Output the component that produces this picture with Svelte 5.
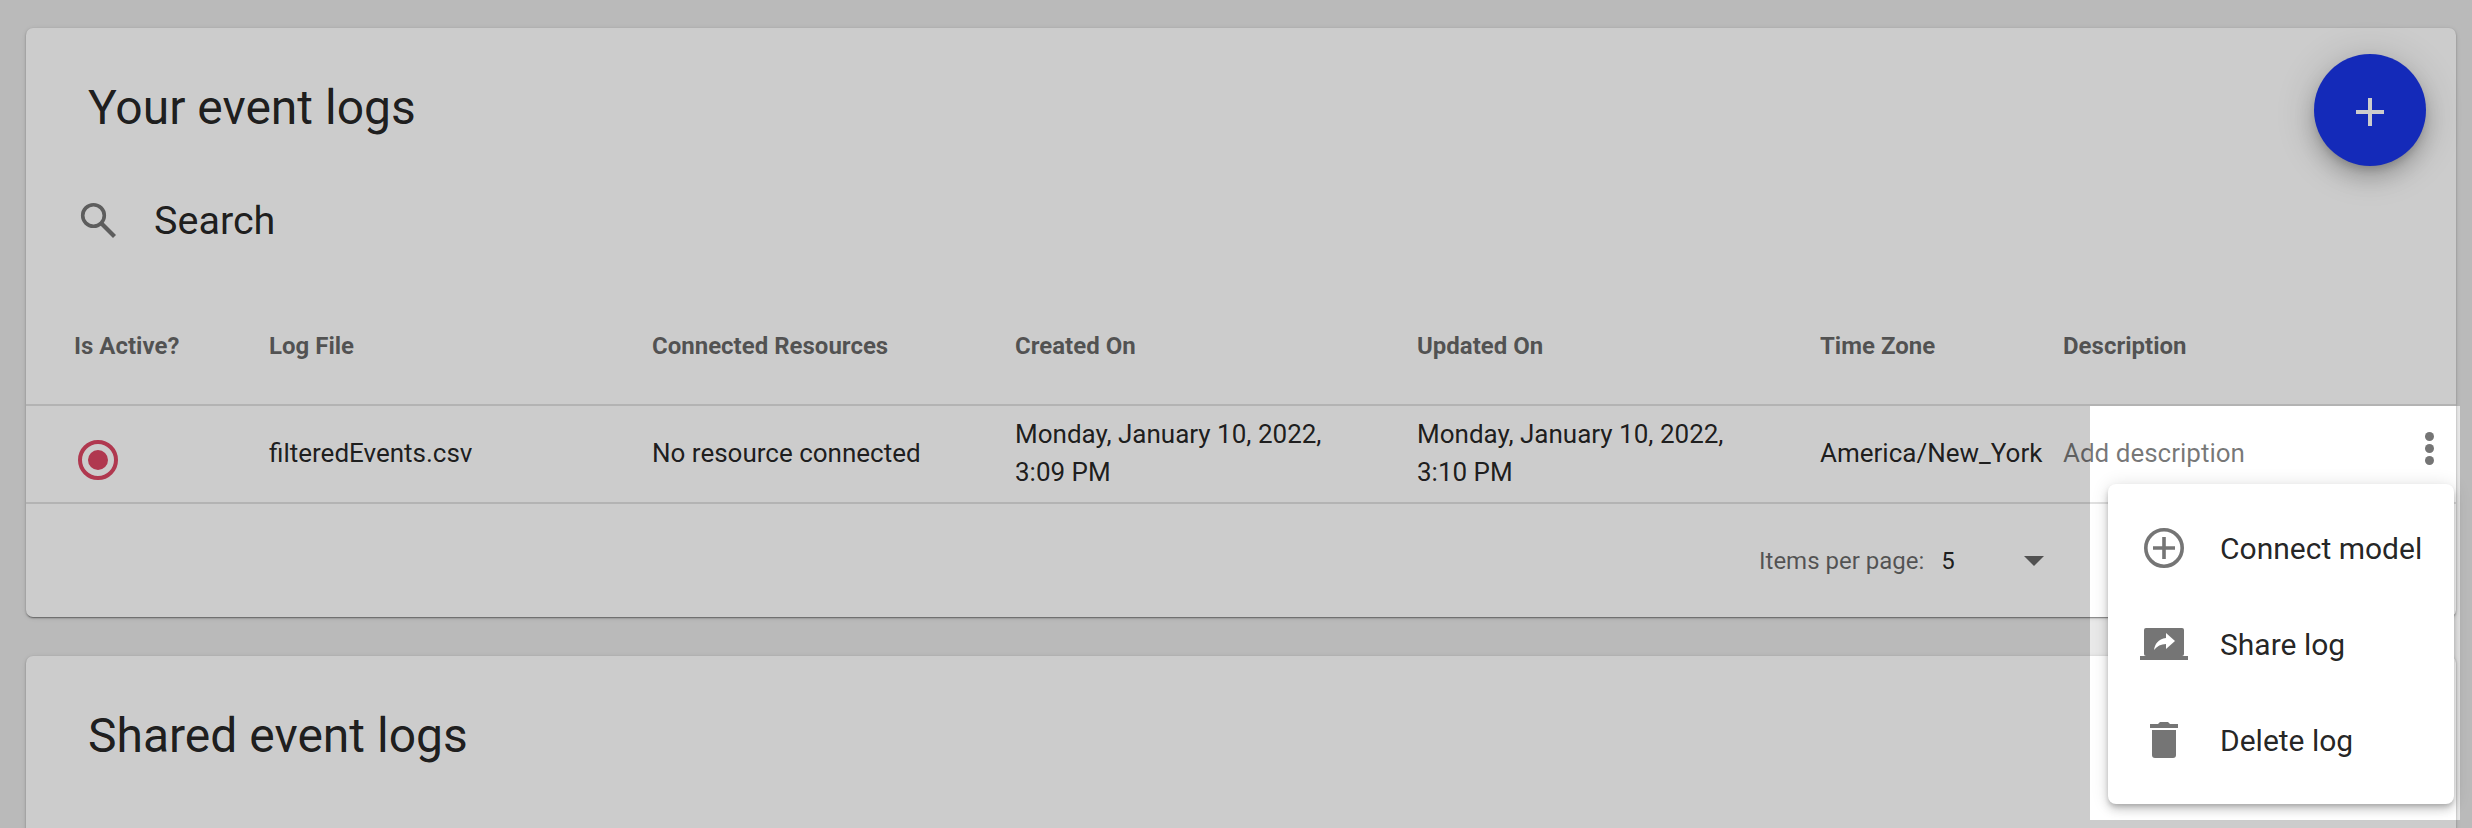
<script>
  const columns = ["Is Active?", "Log File", "Connected Resources", "Created On", "Updated On", "Time Zone", "Description"];
</script>

<div class="page">
  <section class="card">
    <h2>Your event logs</h2>
    <button class="fab" aria-label="Add">
      <svg width="28" height="28" viewBox="0 0 28 28"><path d="M12 0h4v12h12v4H16v12h-4V16H0v-4h12z" fill="#fff"/></svg>
    </button>

    <div class="search">
      <svg width="36" height="36" viewBox="0 0 36 36" fill="none" stroke="#757575" stroke-width="3.6">
        <circle cx="13.5" cy="13.5" r="10.8"/>
        <path d="M21.5 21.5 34.5 34.5" stroke-width="4.2"/>
      </svg>
      <span>Search</span>
    </div>

    <div class="grid head">
      {#each columns as c}
        <div>{c}</div>
      {/each}
    </div>

    <div class="grid row">
      <div class="radio-cell">
        <svg width="40" height="40" viewBox="0 0 40 40">
          <circle cx="20" cy="20" r="18" fill="none" stroke="#dc4663" stroke-width="4"/>
          <circle cx="20" cy="20" r="10" fill="#dc4663"/>
        </svg>
      </div>
      <div>filteredEvents.csv</div>
      <div>No resource connected</div>
      <div>Monday, January 10, 2022,<br>3:09 PM</div>
      <div>Monday, January 10, 2022,<br>3:10 PM</div>
      <div>America/New_York</div>
      <div class="desc">Add description</div>
    </div>

    <div class="pager">
      <span class="label">Items per page:</span>
      <span class="size">5</span>
      <span class="caret"></span>
    </div>
  </section>

  <section class="card second">
    <h2>Shared event logs</h2>
  </section>

  <div class="spotlight"></div>

  <div class="kebab"><i></i><i></i><i></i></div>

  <div class="menu">
    <div class="item">
      <span class="ic">
        <svg width="40" height="40" viewBox="0 0 40 40" fill="none" stroke="#757575">
          <circle cx="20" cy="20" r="18.2" stroke-width="3.6"/>
          <path d="M20 9v22M9 20h22" stroke-width="3.6"/>
        </svg>
      </span>
      Connect model
    </div>
    <div class="item">
      <span class="ic">
        <svg width="48" height="32" viewBox="0 0 48 32">
          <path d="M6 0h36a2 2 0 0 1 2 2v24a2 2 0 0 1-2 2H6a2 2 0 0 1-2-2V2a2 2 0 0 1 2-2z" fill="#757575"/>
          <rect x="0" y="28" width="48" height="4" fill="#757575"/>
          <path d="M35 13 26 5v5c-8 1-11 6-12 12 3-4 7-6 12-6v5z" fill="#fff"/>
        </svg>
      </span>
      Share log
    </div>
    <div class="item">
      <span class="ic">
        <svg width="28" height="36" viewBox="0 0 28 36" fill="#757575">
          <path d="M2 8h24v25a3 3 0 0 1-3 3H5a3 3 0 0 1-3-3z"/>
          <path d="M0 2h8l2-2h8l2 2h8v4H0z"/>
        </svg>
      </span>
      Delete log
    </div>
  </div>
</div>

<style>
  :global(body) {
    margin: 0;
  }

  .page {
    position: relative;
    width: 2472px;
    height: 828px;
    overflow: hidden;
    background: #e9e9e9;
    padding: 28px 16px 0 26px;
    box-sizing: border-box;
    font-family: Roboto, "Liberation Sans", sans-serif;
    color: rgba(0, 0, 0, 0.87);
  }

  .card {
    position: relative;
    height: 589px;
    background: #fff;
    border-radius: 7px;
    box-shadow: 0 2px 1px -1px rgba(0, 0, 0, 0.2), 0 1px 2px rgba(0, 0, 0, 0.28), 0 1px 5px rgba(0, 0, 0, 0.12);
  }

  .second {
    margin-top: 39px;
    height: 400px;
  }

  h2 {
    margin: 0;
    padding: 51px 62px 0;
    font-size: 48px;
    line-height: 58px;
    font-weight: 400;
  }

  .fab {
    position: absolute;
    top: 26px;
    right: 30px;
    width: 112px;
    height: 112px;
    border: 0;
    padding: 4px 0 0;
    border-radius: 50%;
    background: #1a35e8;
    display: flex;
    align-items: center;
    justify-content: center;
    box-shadow: 0 6px 10px -3px rgba(0, 0, 0, 0.2), 0 12px 20px 2px rgba(0, 0, 0, 0.14), 0 4px 36px 6px rgba(0, 0, 0, 0.12);
  }

  .search {
    display: flex;
    align-items: center;
    height: 60px;
    margin-top: 53px;
    padding-left: 54px;
    font-size: 39.5px;
  }

  .search span {
    margin-left: 38px;
  }

  .grid {
    display: grid;
    grid-template-columns: 195px 383px 363px 402px 403px 243px 1fr;
    padding-left: 48px;
    align-items: center;
  }

  .head {
    margin-top: 37px;
    height: 117px;
    font-size: 24px;
    font-weight: 700;
    color: rgba(0, 0, 0, 0.6);
    align-items: start;
    padding-top: 45px;
    box-sizing: border-box;
  }

  .row {
    height: 100px;
    box-sizing: border-box;
    border-top: 2px solid #e0e0e0;
    border-bottom: 2px solid #e0e0e0;
    padding-bottom: 2px;
    font-size: 26px;
    line-height: 38px;
  }

  .radio-cell {
    display: flex;
    padding: 14px 0 0 4px;
  }

  .desc {
    color: rgba(0, 0, 0, 0.54);
  }

  .pager {
    display: flex;
    align-items: center;
    height: 113px;
    padding-left: 1733px;
    font-size: 24px;
  }

  .label {
    color: rgba(0, 0, 0, 0.6);
  }

  .size {
    margin-left: 17px;
  }

  .caret {
    margin-left: 69px;
    width: 0;
    height: 0;
    border-left: 10px solid transparent;
    border-right: 10px solid transparent;
    border-top: 10px solid rgba(0, 0, 0, 0.6);
  }

  /* dims everything except the tour target */
  .spotlight {
    position: absolute;
    left: 2090px;
    top: 406px;
    width: 370px;
    height: 414px;
    box-shadow: 0 0 0 3000px rgba(0, 0, 0, 0.2);
  }

  .kebab {
    position: absolute;
    left: 2425px;
    top: 432px;
    display: flex;
    flex-direction: column;
    gap: 3px;
  }

  .kebab i {
    display: block;
    width: 9px;
    height: 9px;
    border-radius: 50%;
    background: #757575;
  }

  .menu {
    position: absolute;
    left: 2108px;
    top: 484px;
    width: 346px;
    height: 320px;
    box-sizing: border-box;
    padding: 16px 0;
    background: #fff;
    border-radius: 8px;
    box-shadow: 0 3px 5px -1px rgba(0, 0, 0, 0.2), 0 6px 10px rgba(0, 0, 0, 0.14), 0 1px 18px rgba(0, 0, 0, 0.12);
  }

  .item {
    display: flex;
    align-items: center;
    height: 96px;
    font-size: 30px;
  }

  .ic {
    width: 112px;
    flex: none;
    display: flex;
    justify-content: center;
  }
</style>
